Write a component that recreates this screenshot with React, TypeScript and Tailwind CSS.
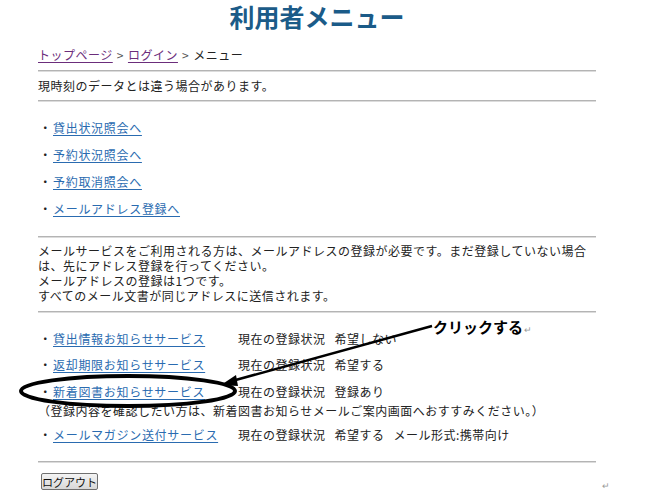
import React from "react";

const jp = { fontFamily: '"Noto Sans CJK JP", "Noto Sans", sans-serif' };

function Hr() {
  return <div className="h-[2px] w-full border-t border-[#b4b4b4] bg-[#dcdcdc]" />;
}

function Bullet() {
  return <span className="inline-block w-[15px] shrink-0 text-center">・</span>;
}

const linkCls = "text-[#2a6bb0] underline underline-offset-2 decoration-1 tracking-[0.7px]";

function Status({ parts }: { parts: string[] }) {
  return (
    <span className="flex gap-[9px] whitespace-nowrap">
      {parts.map((p) => (
        <span key={p}>{p}</span>
      ))}
    </span>
  );
}

export default function App() {
  const menu = ["貸出状況照会へ", "予約状況照会へ", "予約取消照会へ", "メールアドレス登録へ"];
  return (
    <div className="relative w-[647px] h-[497px] bg-white text-[#222] overflow-hidden" style={jp}>
      <div className="ml-[38px] w-[558px] flex flex-col text-[12px] leading-[16px] tracking-[0.5px]">
        <h1 className="text-center text-[25px] leading-[32px] font-bold text-[#1b5b88] tracking-[0px]">
          利用者メニュー
        </h1>
        <div className="mt-[15px] flex items-center gap-[4px]">
          <a className="text-[#6b2d7b] underline underline-offset-2">トップページ</a>
          <span className="text-[#555]">&gt;</span>
          <a className="text-[#6b2d7b] underline underline-offset-2">ログイン</a>
          <span className="text-[#555]">&gt;</span>
          <span>メニュー</span>
        </div>
        <div className="mt-[7px]"><Hr /></div>
        <div className="mt-[6px]">現時刻のデータとは違う場合があります。</div>
        <div className="mt-[6px]"><Hr /></div>
        <div className="mt-[18px] flex flex-col gap-[11px]">
          {menu.map((m) => (
            <div key={m} className="flex">
              <Bullet />
              <a className={linkCls}>{m}</a>
            </div>
          ))}
        </div>
        <div className="mt-[19px]"><Hr /></div>
        <div className="mt-[5px] leading-[15px] whitespace-nowrap">
          <div>メールサービスをご利用される方は、メールアドレスの登録が必要です。まだ登録していない場合</div>
          <div>は、先にアドレス登録を行ってください。</div>
          <div>メールアドレスの登録は1つです。</div>
          <div>すべてのメール文書が同じアドレスに送信されます。</div>
        </div>
        <div className="mt-[8px]"><Hr /></div>
        <div className="mt-[18px] flex flex-col">
          <div className="flex">
            <Bullet />
            <a className={`${linkCls} w-[185px] shrink-0`}>貸出情報お知らせサービス</a>
            <Status parts={["現在の登録状況", "希望しない"]} />
          </div>
          <div className="mt-[10px] flex">
            <Bullet />
            <a className={`${linkCls} w-[185px] shrink-0`}>返却期限お知らせサービス</a>
            <Status parts={["現在の登録状況", "希望する"]} />
          </div>
          <div className="mt-[11px] flex">
            <Bullet />
            <a className={`${linkCls} w-[185px] shrink-0`}>新着図書お知らせサービス</a>
            <Status parts={["現在の登録状況", "登録あり"]} />
          </div>
          <div className="mt-[3px] whitespace-nowrap">
            （登録内容を確認したい方は、新着図書お知らせメールご案内画面へおすすみください。）
          </div>
          <div className="mt-[8px] flex">
            <Bullet />
            <a className={`${linkCls} w-[185px] shrink-0`}>メールマガジン送付サービス</a>
            <Status parts={["現在の登録状況", "希望する", "メール形式:携帯向け"]} />
          </div>
        </div>
        <div className="mt-[18px]"><Hr /></div>
        <div className="mt-[10px]">
          <button className="ml-[3px] h-[17px] w-[57px] border border-[#707070] rounded-[2px] bg-gradient-to-b from-[#f4f4f4] to-[#d8d8d8] text-[11px] leading-[14px] tracking-[0px] text-[#111]">
            ログアウト
          </button>
        </div>
      </div>

      {/* annotation overlay */}
      <svg className="absolute left-0 top-0" width="647" height="497" viewBox="0 0 647 497">
        <ellipse cx="128" cy="391" rx="107" ry="15" fill="none" stroke="#000" strokeWidth="4" />
        <line x1="432" y1="326" x2="232" y2="381" stroke="#000" strokeWidth="2.5" />
        <polygon points="221,385 236,375 238,386" fill="#000" />
      </svg>
      <div className="absolute left-[433px] top-[317px] flex items-end">
        <span className="text-[15px] leading-[20px] font-bold text-black" style={{ fontFamily: '"Noto Sans CJK JP", serif' }}>
          クリックする
        </span>
        <span className="ml-[1px] text-[9px] leading-[14px] text-[#999]">↵</span>
      </div>
      <span className="absolute left-[602px] top-[480px] text-[9px] leading-[12px] text-[#999]">↵</span>
    </div>
  );
}
